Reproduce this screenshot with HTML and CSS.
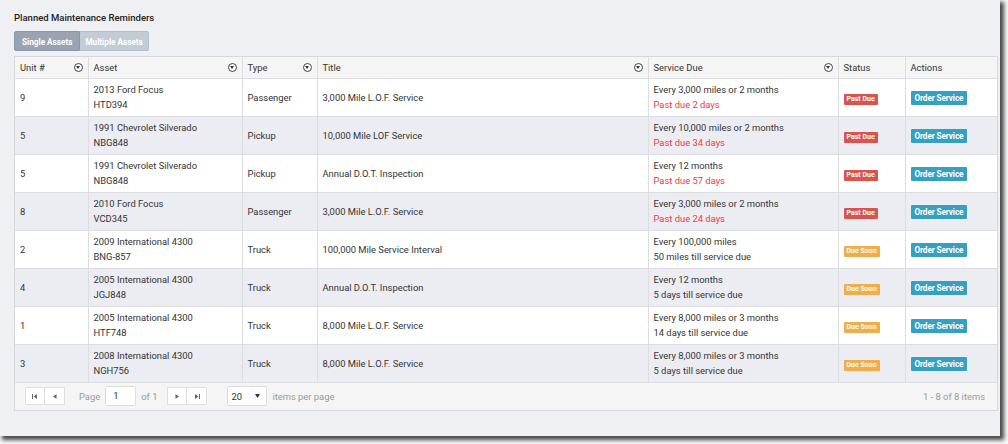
FILE: index.html
```html
<!DOCTYPE html>
<html>
<head>
<meta charset="utf-8">
<link rel="stylesheet" href="styles.css">
</head>
<body>
<div class="frame">
  <h1 class="title">Planned Maintenance Reminders</h1>
  <div class="tabs">
    <span class="tab active">Single Assets</span><span class="tab">Multiple Assets</span>
  </div>
  <div class="grid">
    <table>
      <colgroup>
        <col style="width:73px"><col style="width:154px"><col style="width:75px"><col style="width:331px"><col style="width:190px"><col style="width:67px"><col>
      </colgroup>
      <thead>
        <tr>
          <th><div class="th"><span>Unit #</span><i class="filt"></i></div></th>
          <th><div class="th"><span>Asset</span><i class="filt"></i></div></th>
          <th><div class="th"><span>Type</span><i class="filt"></i></div></th>
          <th><div class="th"><span>Title</span><i class="filt"></i></div></th>
          <th><div class="th"><span>Service Due</span><i class="filt"></i></div></th>
          <th><div class="th"><span>Status</span></div></th>
          <th class="last"><div class="th"><span>Actions</span></div></th>
        </tr>
      </thead>
      <tbody>
        <tr><td>9</td><td>2013 Ford Focus<br>HTD394</td><td>Passenger</td><td>3,000 Mile L.O.F. Service</td><td>Every 3,000 miles or 2 months<br><span class="red">Past due 2 days</span></td><td><span class="badge past">Past Due</span></td><td class="last"><span class="btn">Order Service</span></td></tr>
        <tr class="alt"><td>5</td><td>1991 Chevrolet Silverado<br>NBG848</td><td>Pickup</td><td>10,000 Mile LOF Service</td><td>Every 10,000 miles or 2 months<br><span class="red">Past due 34 days</span></td><td><span class="badge past">Past Due</span></td><td class="last"><span class="btn">Order Service</span></td></tr>
        <tr><td>5</td><td>1991 Chevrolet Silverado<br>NBG848</td><td>Pickup</td><td>Annual D.O.T. Inspection</td><td>Every 12 months<br><span class="red">Past due 57 days</span></td><td><span class="badge past">Past Due</span></td><td class="last"><span class="btn">Order Service</span></td></tr>
        <tr class="alt"><td>8</td><td>2010 Ford Focus<br>VCD345</td><td>Passenger</td><td>3,000 Mile L.O.F. Service</td><td>Every 3,000 miles or 2 months<br><span class="red">Past due 24 days</span></td><td><span class="badge past">Past Due</span></td><td class="last"><span class="btn">Order Service</span></td></tr>
        <tr><td>2</td><td>2009 International 4300<br>BNG-857</td><td>Truck</td><td>100,000 Mile Service Interval</td><td>Every 100,000 miles<br>50 miles till service due</td><td><span class="badge soon">Due Soon</span></td><td class="last"><span class="btn">Order Service</span></td></tr>
        <tr class="alt"><td>4</td><td>2005 International 4300<br>JGJ848</td><td>Truck</td><td>Annual D.O.T. Inspection</td><td>Every 12 months<br>5 days till service due</td><td><span class="badge soon">Due Soon</span></td><td class="last"><span class="btn">Order Service</span></td></tr>
        <tr><td>1</td><td>2005 International 4300<br>HTF748</td><td>Truck</td><td>8,000 Mile L.O.F. Service</td><td>Every 8,000 miles or 3 months<br>14 days till service due</td><td><span class="badge soon">Due Soon</span></td><td class="last"><span class="btn">Order Service</span></td></tr>
        <tr class="alt"><td>3</td><td>2008 International 4300<br>NGH756</td><td>Truck</td><td>8,000 Mile L.O.F. Service</td><td>Every 8,000 miles or 3 months<br>5 days till service due</td><td><span class="badge soon">Due Soon</span></td><td class="last"><span class="btn">Order Service</span></td></tr>
      </tbody>
    </table>
    <div class="pager">
      <div class="pgroup">
        <span class="pbtn"><svg width="6" height="5" viewBox="0 0 6 5"><rect x="0" y="0" width="1" height="5" fill="#666"/><path d="M5 0 L1.5 2.5 L5 5 Z" fill="#666"/></svg></span><span class="pbtn"><svg width="4" height="5" viewBox="0 0 4 5"><path d="M3.5 0 L0 2.5 L3.5 5 Z" fill="#666"/></svg></span>
      </div>
      <span class="plabel">Page</span>
      <span class="pinput">1</span>
      <span class="plabel">of 1</span>
      <div class="pgroup next">
        <span class="pbtn"><svg width="4" height="5" viewBox="0 0 4 5"><path d="M0.5 0 L4 2.5 L0.5 5 Z" fill="#666"/></svg></span><span class="pbtn"><svg width="6" height="5" viewBox="0 0 6 5"><path d="M1 0 L4.5 2.5 L1 5 Z" fill="#666"/><rect x="5" y="0" width="1" height="5" fill="#666"/></svg></span>
      </div>
      <span class="psel">20<svg width="5" height="4" viewBox="0 0 5 4"><path d="M0 0 L5 0 L2.5 4 Z" fill="#333"/></svg></span>
      <span class="plabel">items per page</span>
      <span class="pinfo">1 - 8 of 8 items</span>
    </div>
  </div>
</div>
</body>
</html>
```
FILE: styles.css
```css
* { box-sizing: border-box; }
html, body { margin: 0; padding: 0; background: #f7f7f8; }
body { width: 1008px; height: 444px; overflow: hidden; font-family: Roboto, "Liberation Sans", sans-serif; }
.frame {
  width: 1000px; height: 436px;
  background: #eff0f4;
  box-shadow: 3px 3px 4px 1px #4a4a4a;
  padding: 12px 0 0 14px;
}
.title { margin: 0; font-size: 9.5px; font-weight: 500; color: #222; line-height: 12px; }
.tabs { display: flex; margin-top: 7px; }
.tab {
  height: 20px; line-height: 20px; padding: 0 6px;
  background: #c3cbd7; color: #fff; font-size: 8.2px; font-weight: 700;
  border: 1px solid #b4bdca;
}
.tab.active { background: #9aa3b2; border-color: #8d96a5; border-radius: 2px 0 0 2px; padding: 0 7px; }
.tab + .tab { border-left: 0; border-radius: 0 2px 2px 0; padding: 0 5px; }
.grid {
  margin-top: 5px; width: 984px;
  border: 1px solid #d6d8dc;
  background: #fff;
}
table { width: 100%; border-collapse: collapse; table-layout: fixed; font-size: 9.4px; color: #333; }
th { height: 21px; background: #f5f5f5; font-weight: 400; text-align: left; padding: 0; border-right: 1px solid #dcdde0; border-bottom: 1px solid #dcdde0; }
.th { display: flex; align-items: center; justify-content: space-between; padding: 0 5px 0 5px; }
.filt {
  display: inline-block; width: 9px; height: 9px; border: 1px solid #444; border-radius: 50%;
  position: relative; background: #fff;
}
.filt::after {
  content: ""; position: absolute; left: 1.5px; top: 2.3px;
  border-left: 2.5px solid transparent; border-right: 2.5px solid transparent; border-top: 3px solid #333;
}
td { height: 38px; padding: 0 5px; line-height: 15px; border-right: 1px solid #dcdde0; border-bottom: 1px solid #dcdde0; vertical-align: middle; }
th.last, td.last { border-right: 0; }
tr.alt td { background: #ecedf2; }
.red { color: #f03a3a; }
.badge {
  display: inline-block; height: 11px; line-height: 11px; padding: 0 3px;
  font-size: 7px; font-weight: 700; color: #fff; border-radius: 1px;
}
.past { background: #d9534f; }
.soon { background: #f0ad4e; }
.btn {
  display: inline-block; height: 14px; line-height: 14px; padding: 0 4px;
  background: #36a0c0; color: #fff; font-size: 8.2px; font-weight: 700; border-radius: 1px; letter-spacing: -0.1px;
}
.pager {
  display: flex; align-items: center; height: 27px; background: #f5f5f5;
  padding: 0 12px 0 10px; font-size: 9.4px; color: #9a9a9a;
}
.pgroup { display: flex; }
.pbtn {
  width: 20px; height: 18px; background: #fff; border: 1px solid #e0e0e0;
  display: flex; align-items: center; justify-content: center;
}
.pbtn + .pbtn { border-left: 0; }
.plabel { margin: 0 5px 0 14px; }
.pinput {
  width: 31px; height: 20px; background: #fff; border: 1px solid #dcdcdc; border-radius: 2px;
  color: #333; padding-left: 7px; line-height: 18px;
}
.pinput + .plabel { margin-left: 5px; margin-right: 0; }
.pgroup.next { margin-left: 10px; }
.psel {
  margin-left: 20px; width: 40px; height: 20px; background: #fff; border: 1px solid #dcdcdc; border-radius: 2px;
  color: #333; padding: 0 6px 0 3px; display: flex; align-items: center; justify-content: space-between;
}
.psel + .plabel { margin-left: 5px; }
.pinfo { margin-left: auto; }
```
